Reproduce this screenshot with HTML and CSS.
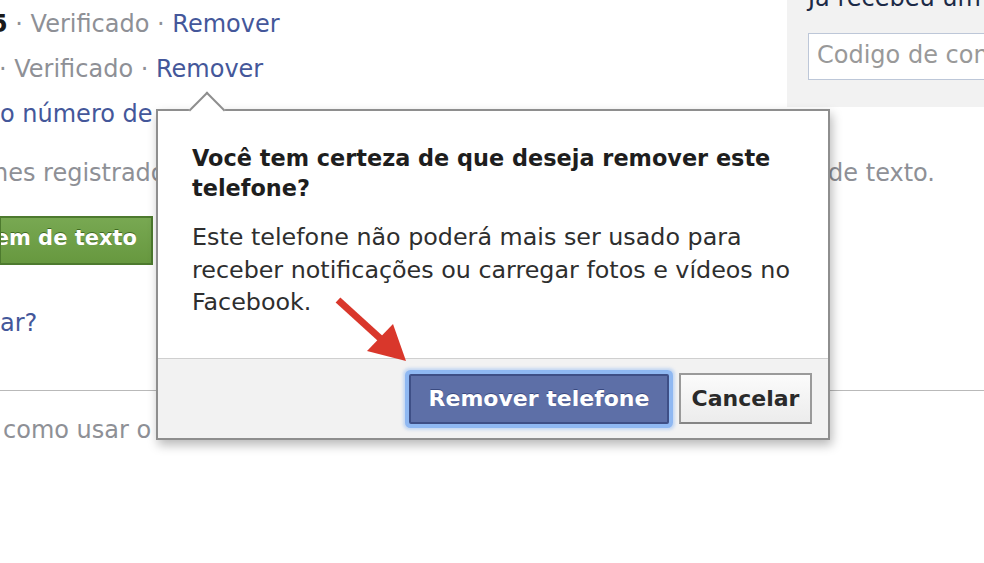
FILE: index.html
```html
<!DOCTYPE html>
<html lang="pt-BR">
<head>
<meta charset="utf-8">
<title>Remover telefone</title>
<link rel="stylesheet" href="styles.css">
</head>
<body>
<div class="page">
  <aside class="code-panel">
    <div class="code-title">Ja recebeu um código?</div>
    <div class="code-input">Codigo de confirmação</div>
  </aside>
  <div class="row row-1"><b class="num">5</b> · <span class="muted">Verificado</span> · <a class="link">Remover</a></div>
  <div class="row row-2">· <span class="muted">Verificado</span> · <a class="link">Remover</a></div>
  <div class="row"><a class="link">o número de</a></div>
  <div class="row row-split">
    <span class="muted clip">nes registrados</span>
    <span class="muted tail">de texto.</span>
  </div>
  <div class="green-wrap"><span class="btn-green">em de texto</span></div>
  <div class="row row-ask"><a class="link">ar?</a></div>
  <div class="divider"></div>
  <div class="row row-how"><span class="muted">como usar o</span></div>

  <div class="dialog">
    <div class="caret"></div>
    <div class="dialog-body">
      <h2 class="dialog-title">Você tem certeza de que deseja remover este telefone?</h2>
      <p class="dialog-text">Este telefone não poderá mais ser usado para receber notificações ou carregar fotos e vídeos no Facebook.</p>
    </div>
    <div class="dialog-footer">
      <span class="btn btn-primary">Remover telefone</span>
      <span class="btn btn-cancel">Cancelar</span>
    </div>
  </div>

  <svg class="annot-arrow" width="90" height="80" viewBox="0 0 90 80">
    <line x1="8" y1="10" x2="52" y2="50" stroke="#d9372b" stroke-width="7"/>
    <polygon points="37,61 63,34 76,71" fill="#d9372b"/>
  </svg>
</div>
</body>
</html>
```
FILE: styles.css
```css
html, body {
  margin: 0;
  padding: 0;
  width: 984px;
  height: 563px;
  overflow: hidden;
  background: #fff;
}

.page {
  position: relative;
  width: 984px;
  height: 563px;
  padding-top: 2px;
  box-sizing: border-box;
  font-family: "DejaVu Sans", "Liberation Sans", sans-serif;
  font-size: 24px;
  color: #333;
}

.code-panel {
  float: right;
  width: 197px;
  height: 107px;
  margin-top: -2px;
  background: #f2f2f2;
  padding-left: 21px;
  box-sizing: border-box;
  overflow: hidden;
}

.code-title {
  margin-top: -15px;
  line-height: 26px;
  color: #1c2a47;
  white-space: nowrap;
}

.code-input {
  margin-top: 22px;
  height: 47px;
  width: 200px;
  box-sizing: border-box;
  border: 1px solid #bdc7d8;
  background: #fff;
  color: #999;
  padding-left: 8px;
  line-height: 43px;
  white-space: nowrap;
  overflow: hidden;
}

.row {
  line-height: 45px;
  white-space: nowrap;
  color: #8e9096;
}

.row-1 { margin-left: -9px; }
.row-2 { margin-left: -1px; }

.num { color: #1a1a1a; }
.muted { color: #8e9096; }
.link { color: #44579a; text-decoration: none; }

.row-split {
  display: flex;
  justify-content: space-between;
  margin-top: 14px;
}
.clip {
  width: 166px;
  overflow: hidden;
  margin-left: -7px;
}
.tail { padding-right: 49px; }

.green-wrap {
  margin-top: 20px;
  height: 49px;
}
.btn-green {
  display: inline-block;
  box-sizing: border-box;
  height: 49px;
  width: 154px;
  margin-left: -1px;
  padding-right: 14px;
  text-align: right;
  direction: rtl;
  white-space: nowrap;
  overflow: hidden;
  background: linear-gradient(#78a852, #67983f);
  border: 2px solid #4d7a2e;
  color: #fff;
  font-weight: bold;
  font-size: 21px;
  line-height: 41px;
  text-shadow: 0 -1px 0 #3f6a22;
}

.row-ask { margin-top: 36px; }

.divider {
  margin-top: 44px;
  border-top: 1px solid #b9b9b9;
}

.row-how {
  margin-top: 17px;
  margin-left: 3px;
}

/* Dialog overlay */
.dialog {
  position: absolute;
  left: 156px;
  top: 109px;
  width: 674px;
  height: 331px;
  box-sizing: border-box;
  background: #fff;
  border: 2px solid #8e8e8e;
  box-shadow: 2px 5px 10px rgba(0, 0, 0, 0.28);
  display: flex;
  flex-direction: column;
}

.caret {
  position: absolute;
  left: 36px;
  top: -14px;
  width: 26px;
  height: 26px;
  box-sizing: border-box;
  background: #fff;
  border-top: 2px solid #8e8e8e;
  border-left: 2px solid #8e8e8e;
  transform: rotate(45deg);
}

.dialog-body {
  flex: 1;
  padding: 32px 30px 0 34px;
}

.dialog-title {
  margin: 0;
  font-size: 22.4px;
  line-height: 30px;
  font-weight: bold;
  color: #1e1e1e;
}

.dialog-text {
  margin: 18px 0 0;
  font-size: 23.8px;
  line-height: 32.5px;
  color: #2e2e2e;
}

.dialog-footer {
  height: 80px;
  box-sizing: border-box;
  border-top: 1px solid #cfcfcf;
  background: #f2f2f2;
  display: flex;
  justify-content: flex-end;
  align-items: center;
  gap: 10px;
  padding-right: 16px;
}

.btn {
  box-sizing: border-box;
  font-weight: bold;
  font-size: 22px;
  text-align: center;
  white-space: nowrap;
}

.btn-primary {
  width: 260px;
  height: 50px;
  line-height: 46px;
  background: #5d6fa7;
  border: 2px solid #3e4f86;
  color: #fff;
  border-radius: 2px;
  box-shadow: 0 0 0 4px #8fb8f2, 0 0 3px 6px rgba(143, 184, 242, 0.45);
  text-shadow: 0 -1px 0 #3a4a80;
}

.btn-cancel {
  width: 133px;
  height: 51px;
  line-height: 47px;
  background: linear-gradient(#fbfbfb, #ececec);
  border: 2px solid #9a9a9a;
  border-bottom-color: #858585;
  color: #2a2a2a;
}

.annot-arrow {
  position: absolute;
  left: 330px;
  top: 290px;
}
```
